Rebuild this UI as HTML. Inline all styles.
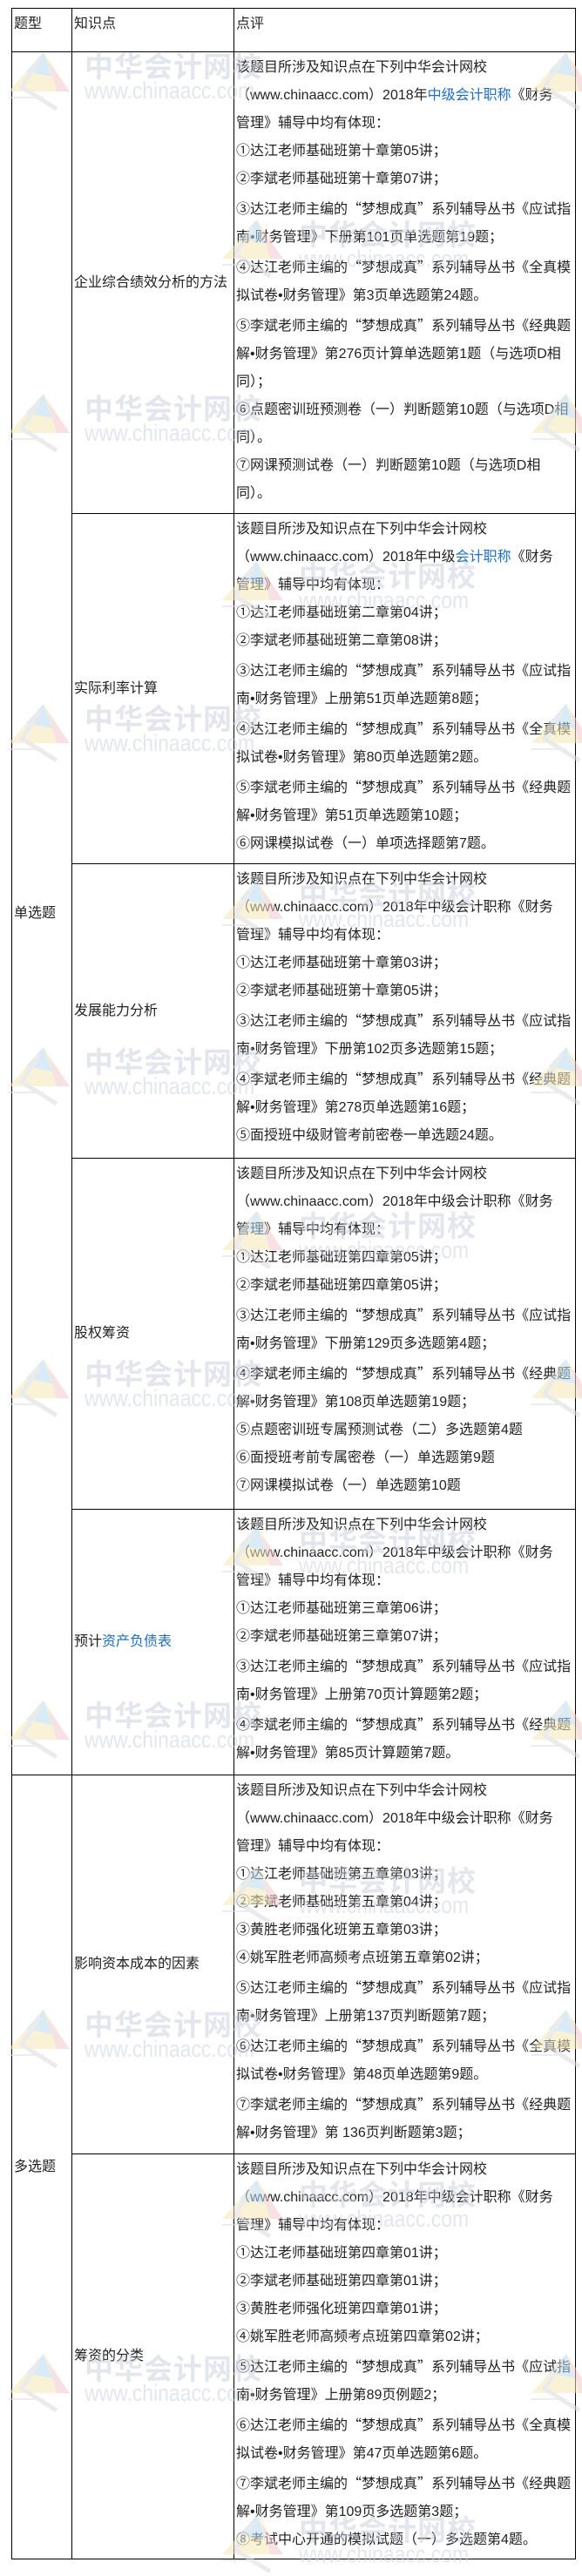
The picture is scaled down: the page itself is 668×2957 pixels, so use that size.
<!DOCTYPE html>
<html><head><meta charset="utf-8">
<style>
html,body{margin:0;padding:0;background:#fff;}
body{width:668px;height:2945px;position:relative;overflow:hidden;font-family:"Liberation Sans","Noto Sans CJK SC",sans-serif;font-size:16px;color:#222;}
table{position:absolute;left:13px;top:9px;border-collapse:collapse;table-layout:fixed;width:647px;z-index:1;}
td{border:1px solid #000;padding:0 0 0 2px;vertical-align:middle;line-height:32px;white-space:nowrap;overflow:hidden;}
td.c3{vertical-align:top;padding-top:2px;}
.b{color:#1f6fc0;}
q{quotes:none;font-family:"Noto Sans CJK SC",sans-serif;}
q:before,q:after{content:none;}
.wm{position:absolute;z-index:2;pointer-events:none;opacity:.5;}
.wm .t1{font-family:"Noto Sans CJK SC",sans-serif;font-size:33px;color:#c9cfdd;letter-spacing:1px;line-height:34px;font-weight:bold;}
.wm .t2{font-family:"Liberation Sans",sans-serif;font-size:27px;color:#c9cfdd;line-height:26px;transform:scaleX(.85);transform-origin:left;}
.lg{position:absolute;z-index:2;opacity:.55;}
</style></head><body>
<table>
<colgroup><col style="width:69px"><col style="width:186px"><col style="width:392px"></colgroup>
<tr style="height:50px"><td style="vertical-align:top;padding-top:2px">题型</td><td style="vertical-align:top;padding-top:2px">知识点</td><td class="c3">点评</td></tr>
<tr style="height:530px"><td rowspan="5">单选题</td><td>企业综合绩效分析的方法</td><td class="c3">该题目所涉及知识点在下列中华会计网校<br>（www.chinaacc.com）2018年<span class="b">中级会计职称</span>《财务<br>管理》辅导中均有体现：<br>①达江老师基础班第十章第05讲；<br>②李斌老师基础班第十章第07讲；<br>③达江老师主编的<q>“</q>梦想成真<q>”</q>系列辅导丛书《应试指<br>南•财务管理》下册第101页单选题第19题；<br>④达江老师主编的<q>“</q>梦想成真<q>”</q>系列辅导丛书《全真模<br>拟试卷•财务管理》第3页单选题第24题。<br>⑤李斌老师主编的<q>“</q>梦想成真<q>”</q>系列辅导丛书《经典题<br>解•财务管理》第276页计算单选题第1题（与选项D相<br>同）；<br>⑥点题密训班预测卷（一）判断题第10题（与选项D相<br>同）。<br>⑦网课预测试卷（一）判断题第10题（与选项D相<br>同）。</td></tr>
<tr style="height:402px"><td>实际利率计算</td><td class="c3">该题目所涉及知识点在下列中华会计网校<br>（www.chinaacc.com）2018年中级<span class="b">会计职称</span>《财务<br>管理》辅导中均有体现：<br>①达江老师基础班第二章第04讲；<br>②李斌老师基础班第二章第08讲；<br>③达江老师主编的<q>“</q>梦想成真<q>”</q>系列辅导丛书《应试指<br>南•财务管理》上册第51页单选题第8题；<br>④达江老师主编的<q>“</q>梦想成真<q>”</q>系列辅导丛书《全真模<br>拟试卷•财务管理》第80页单选题第2题。<br>⑤李斌老师主编的<q>“</q>梦想成真<q>”</q>系列辅导丛书《经典题<br>解•财务管理》第51页单选题第10题；<br>⑥网课模拟试卷（一）单项选择题第7题。</td></tr>
<tr style="height:338px"><td>发展能力分析</td><td class="c3">该题目所涉及知识点在下列中华会计网校<br>（www.chinaacc.com）2018年中级会计职称《财务<br>管理》辅导中均有体现：<br>①达江老师基础班第十章第03讲；<br>②李斌老师基础班第十章第05讲；<br>③达江老师主编的<q>“</q>梦想成真<q>”</q>系列辅导丛书《应试指<br>南•财务管理》下册第102页多选题第15题；<br>④李斌老师主编的<q>“</q>梦想成真<q>”</q>系列辅导丛书《经典题<br>解•财务管理》第278页单选题第16题；<br>⑤面授班中级财管考前密卷一单选题24题。</td></tr>
<tr style="height:403px"><td>股权筹资</td><td class="c3">该题目所涉及知识点在下列中华会计网校<br>（www.chinaacc.com）2018年中级会计职称《财务<br>管理》辅导中均有体现：<br>①达江老师基础班第四章第05讲；<br>②李斌老师基础班第四章第05讲；<br>③达江老师主编的<q>“</q>梦想成真<q>”</q>系列辅导丛书《应试指<br>南•财务管理》下册第129页多选题第4题；<br>④李斌老师主编的<q>“</q>梦想成真<q>”</q>系列辅导丛书《经典题<br>解•财务管理》第108页单选题第19题；<br>⑤点题密训班专属预测试卷（二）多选题第4题<br>⑥面授班考前专属密卷（一）单选题第9题<br>⑦网课模拟试卷（一）单选题第10题</td></tr>
<tr style="height:305px"><td>预计<span class="b">资产负债表</span></td><td class="c3">该题目所涉及知识点在下列中华会计网校<br>（www.chinaacc.com）2018年中级会计职称《财务<br>管理》辅导中均有体现：<br>①达江老师基础班第三章第06讲；<br>②李斌老师基础班第三章第07讲；<br>③达江老师主编的<q>“</q>梦想成真<q>”</q>系列辅导丛书《应试指<br>南•财务管理》上册第70页计算题第2题；<br>④李斌老师主编的<q>“</q>梦想成真<q>”</q>系列辅导丛书《经典题<br>解•财务管理》第85页计算题第7题。</td></tr>
<tr style="height:435px"><td rowspan="2">多选题</td><td>影响资本成本的因素</td><td class="c3">该题目所涉及知识点在下列中华会计网校<br>（www.chinaacc.com）2018年中级会计职称《财务<br>管理》辅导中均有体现：<br>①达江老师基础班第五章第03讲；<br>②李斌老师基础班第五章第04讲；<br>③黄胜老师强化班第五章第03讲；<br>④姚军胜老师高频考点班第五章第02讲；<br>⑤达江老师主编的<q>“</q>梦想成真<q>”</q>系列辅导丛书《应试指<br>南•财务管理》上册第137页判断题第7题；<br>⑥达江老师主编的<q>“</q>梦想成真<q>”</q>系列辅导丛书《全真模<br>拟试卷•财务管理》第48页单选题第9题。<br>⑦李斌老师主编的<q>“</q>梦想成真<q>”</q>系列辅导丛书《经典题<br>解•财务管理》第 136页判断题第3题；</td></tr>
<tr style="height:465px"><td>筹资的分类</td><td class="c3">该题目所涉及知识点在下列中华会计网校<br>（www.chinaacc.com）2018年中级会计职称《财务<br>管理》辅导中均有体现：<br>①达江老师基础班第四章第01讲；<br>②李斌老师基础班第四章第01讲；<br>③黄胜老师强化班第四章第01讲；<br>④姚军胜老师高频考点班第四章第02讲；<br>⑤达江老师主编的<q>“</q>梦想成真<q>”</q>系列辅导丛书《应试指<br>南•财务管理》上册第89页例题2；<br>⑥达江老师主编的<q>“</q>梦想成真<q>”</q>系列辅导丛书《全真模<br>拟试卷•财务管理》第47页单选题第6题。<br>⑦李斌老师主编的<q>“</q>梦想成真<q>”</q>系列辅导丛书《经典题<br>解•财务管理》第109页多选题第3题；<br>⑧考试中心开通的模拟试题（一）多选题第4题。</td></tr>
</table>

<svg width="0" height="0" style="position:absolute"><defs>
<g id="logo"><polygon points="40,0 0,45 70,45" fill="#f5e9b8"/><polygon points="40,0 20,22 50,28" fill="#b9dcef"/><polygon points="45,10 70,45 55,45" fill="#f3c9cf"/><path d="M35,8 L15,40 L55,65" fill="none" stroke="#dcdcdc" stroke-width="5"/><line x1="-5" y1="52" x2="40" y2="52" stroke="#ddd" stroke-width="2"/></g>
</defs></svg>

<div class="wm" style="left:97px;top:57px"><div class="t1">中华会计网校</div><div class="t2">www.chinaacc.com</div></div>
<div class="wm" style="left:97px;top:450px"><div class="t1">中华会计网校</div><div class="t2">www.chinaacc.com</div></div>
<div class="wm" style="left:97px;top:806px"><div class="t1">中华会计网校</div><div class="t2">www.chinaacc.com</div></div>
<div class="wm" style="left:97px;top:1200px"><div class="t1">中华会计网校</div><div class="t2">www.chinaacc.com</div></div>
<div class="wm" style="left:97px;top:1558px"><div class="t1">中华会计网校</div><div class="t2">www.chinaacc.com</div></div>
<div class="wm" style="left:97px;top:1950px"><div class="t1">中华会计网校</div><div class="t2">www.chinaacc.com</div></div>
<div class="wm" style="left:97px;top:2305px"><div class="t1">中华会计网校</div><div class="t2">www.chinaacc.com</div></div>
<div class="wm" style="left:97px;top:2700px"><div class="t1">中华会计网校</div><div class="t2">www.chinaacc.com</div></div>
<div class="wm" style="left:343px;top:250px"><div class="t1">中华会计网校</div><div class="t2">www.chinaacc.com</div></div>
<div class="wm" style="left:343px;top:642px"><div class="t1">中华会计网校</div><div class="t2">www.chinaacc.com</div></div>
<div class="wm" style="left:343px;top:1008px"><div class="t1">中华会计网校</div><div class="t2">www.chinaacc.com</div></div>
<div class="wm" style="left:343px;top:1388px"><div class="t1">中华会计网校</div><div class="t2">www.chinaacc.com</div></div>
<div class="wm" style="left:343px;top:1750px"><div class="t1">中华会计网校</div><div class="t2">www.chinaacc.com</div></div>
<div class="wm" style="left:343px;top:2140px"><div class="t1">中华会计网校</div><div class="t2">www.chinaacc.com</div></div>
<div class="wm" style="left:343px;top:2500px"><div class="t1">中华会计网校</div><div class="t2">www.chinaacc.com</div></div>
<div class="wm" style="left:343px;top:2885px"><div class="t1">中华会计网校</div><div class="t2">www.chinaacc.com</div></div>

<svg class="lg" style="left:10px;top:60px" width="80" height="70"><use href="#logo"/></svg>
<svg class="lg" style="left:10px;top:452px" width="80" height="70"><use href="#logo"/></svg>
<svg class="lg" style="left:10px;top:808px" width="80" height="70"><use href="#logo"/></svg>
<svg class="lg" style="left:10px;top:1202px" width="80" height="70"><use href="#logo"/></svg>
<svg class="lg" style="left:10px;top:1560px" width="80" height="70"><use href="#logo"/></svg>
<svg class="lg" style="left:10px;top:1952px" width="80" height="70"><use href="#logo"/></svg>
<svg class="lg" style="left:10px;top:2307px" width="80" height="70"><use href="#logo"/></svg>
<svg class="lg" style="left:10px;top:2702px" width="80" height="70"><use href="#logo"/></svg>
<svg class="lg" style="left:255px;top:252px" width="80" height="70"><use href="#logo"/></svg>
<svg class="lg" style="left:255px;top:644px" width="80" height="70"><use href="#logo"/></svg>
<svg class="lg" style="left:255px;top:1010px" width="80" height="70"><use href="#logo"/></svg>
<svg class="lg" style="left:255px;top:1390px" width="80" height="70"><use href="#logo"/></svg>
<svg class="lg" style="left:255px;top:1752px" width="80" height="70"><use href="#logo"/></svg>
<svg class="lg" style="left:255px;top:2142px" width="80" height="70"><use href="#logo"/></svg>
<svg class="lg" style="left:255px;top:2502px" width="80" height="70"><use href="#logo"/></svg>
<svg class="lg" style="left:255px;top:2887px" width="80" height="70"><use href="#logo"/></svg>
<svg class="lg" style="left:610px;top:60px" width="80" height="70"><use href="#logo"/></svg>
<svg class="lg" style="left:610px;top:452px" width="80" height="70"><use href="#logo"/></svg>
<svg class="lg" style="left:610px;top:808px" width="80" height="70"><use href="#logo"/></svg>
<svg class="lg" style="left:610px;top:1202px" width="80" height="70"><use href="#logo"/></svg>
<svg class="lg" style="left:610px;top:1560px" width="80" height="70"><use href="#logo"/></svg>
<svg class="lg" style="left:610px;top:1952px" width="80" height="70"><use href="#logo"/></svg>
<svg class="lg" style="left:610px;top:2307px" width="80" height="70"><use href="#logo"/></svg>
<svg class="lg" style="left:610px;top:2702px" width="80" height="70"><use href="#logo"/></svg>
</body></html>
